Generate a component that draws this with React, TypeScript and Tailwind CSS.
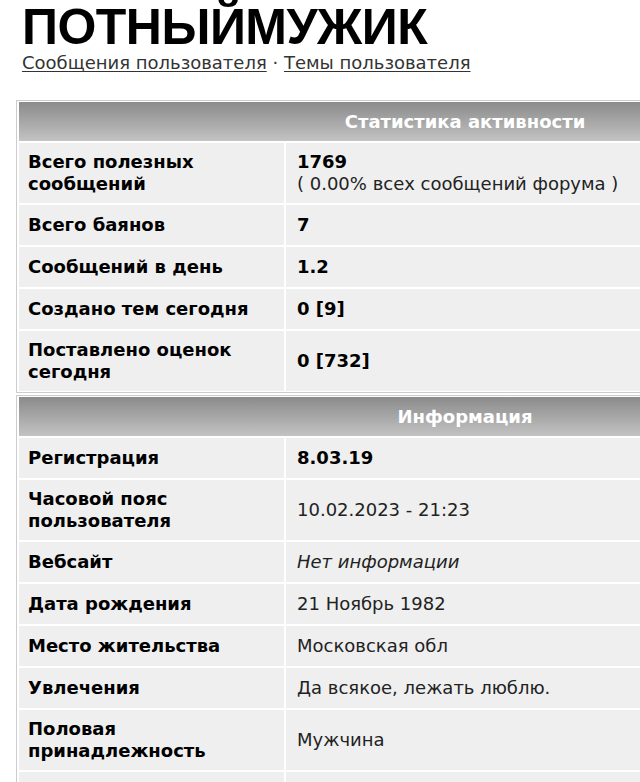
import React from "react";

type Row = { label: string[]; value: React.ReactNode; tall?: boolean };

const activity: Row[] = [
  {
    label: ["Всего полезных", "сообщений"],
    tall: true,
    value: (
      <div className="leading-[22px]">
        <div className="font-bold text-black">1769</div>
        <div>( 0.00% всех сообщений форума )</div>
      </div>
    ),
  },
  { label: ["Всего баянов"], value: <span className="font-bold text-black">7</span> },
  { label: ["Сообщений в день"], value: <span className="font-bold text-black">1.2</span> },
  { label: ["Создано тем сегодня"], value: <span className="font-bold text-black">0 [9]</span> },
  {
    label: ["Поставлено оценок", "сегодня"],
    tall: true,
    value: <span className="font-bold text-black">0 [732]</span>,
  },
];

const info: Row[] = [
  { label: ["Регистрация"], value: <span className="font-bold text-black">8.03.19</span> },
  { label: ["Часовой пояс", "пользователя"], tall: true, value: "10.02.2023 - 21:23" },
  { label: ["Вебсайт"], value: <span className="italic">Нет информации</span> },
  { label: ["Дата рождения"], value: "21 Ноябрь 1982" },
  { label: ["Место жительства"], value: "Московская обл" },
  { label: ["Увлечения"], value: "Да всякое, лежать люблю." },
  { label: ["Половая", "принадлежность"], tall: true, value: "Мужчина" },
  { label: [], value: "" },
];

function Section({ title, rows }: { title: string; rows: Row[] }) {
  return (
    <div className="w-[898px] border border-[#cccccc] bg-white px-[2px] py-[1px]">
      <div className="flex flex-col gap-[2px]">
        <div className="flex h-[39px] items-center justify-center bg-gradient-to-b from-[#8b8b8b] to-[#c3c3c3] text-[18px] font-bold text-white">
          {title}
        </div>
        {rows.map((r, i) => (
          <div key={i} className={`flex gap-[2px] ${r.tall ? "h-[60px]" : "h-[40px]"}`}>
            <div className="flex w-[265px] shrink-0 flex-col justify-center bg-[#efefef] pl-[9px] text-[18px] font-bold leading-[22px] text-black">
              {r.label.map((l, j) => (
                <div key={j}>{l}</div>
              ))}
            </div>
            <div className="flex flex-1 items-center bg-[#efefef] pl-[11px] text-[18px] leading-[22px] text-[#222222]">
              {r.value}
            </div>
          </div>
        ))}
      </div>
    </div>
  );
}

export default function App() {
  return (
    <div
      className="h-[782px] w-[640px] overflow-hidden bg-white"
      style={{ fontFamily: '"DejaVu Sans", Verdana, sans-serif' }}
    >
      <div className="pl-[22px]">
        <h1
          className="pt-[3px] text-[50px] font-bold leading-[49px] tracking-[-0.5px] text-black"
          style={{ fontFamily: '"Liberation Sans", Arial, sans-serif' }}
        >
          ПОТНЫЙМУЖИК
        </h1>
        <div className="text-[18px] leading-[22px] text-[#333333]">
          <a className="underline underline-offset-2">Сообщения пользователя</a>
          <span> · </span>
          <a className="underline underline-offset-2">Темы пользователя</a>
        </div>
      </div>
      <div className="mt-[26px] flex flex-col gap-[2px] pl-[16px]">
        <Section title="Статистика активности" rows={activity} />
        <Section title="Информация" rows={info} />
      </div>
    </div>
  );
}
